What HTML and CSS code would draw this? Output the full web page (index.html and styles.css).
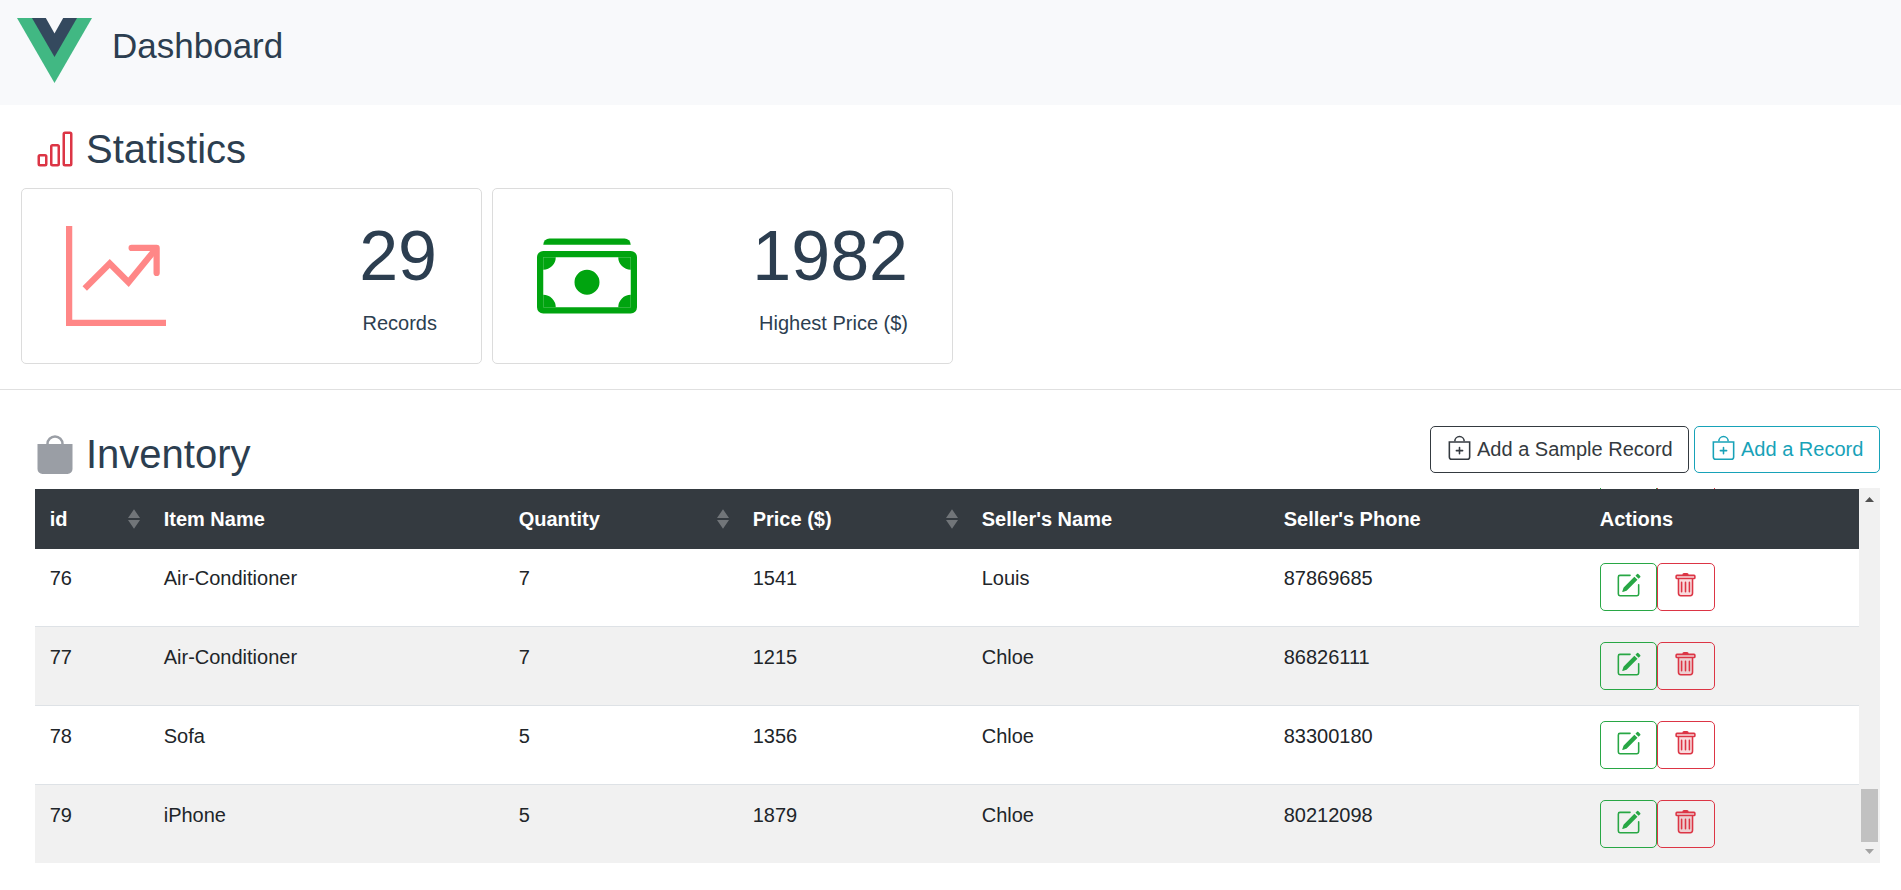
FILE: index.html
```html
<!DOCTYPE html>
<html lang="en">
<head>
<meta charset="utf-8">
<title>Dashboard</title>
<link rel="stylesheet" href="styles.css">
</head>
<body>
<svg class="sprite" aria-hidden="true">
  <symbol id="bag-plus" viewBox="0 0 16 16">
    <path fill-rule="evenodd" d="M14 5H2v9a1 1 0 0 0 1 1h10a1 1 0 0 0 1-1V5zM1 4v10a2 2 0 0 0 2 2h10a2 2 0 0 0 2-2V4H1z"/>
    <path d="M8 1.5A2.5 2.5 0 0 0 5.5 4h-1a3.5 3.5 0 1 1 7 0h-1A2.5 2.5 0 0 0 8 1.5z"/>
    <path d="M8 7.5a.5.5 0 0 1 .5.5v1.5H10a.5.5 0 0 1 0 1H8.5V12a.5.5 0 0 1-1 0v-1.5H6a.5.5 0 0 1 0-1h1.5V8a.5.5 0 0 1 .5-.5z"/>
  </symbol>
  <symbol id="pencil" viewBox="0 0 16 16">
    <path d="M15.502 1.94a.5.5 0 0 1 0 .706L14.459 3.69l-2-2L13.502.646a.5.5 0 0 1 .707 0l1.293 1.293zm-1.75 2.456-2-2L4.939 9.21a.5.5 0 0 0-.121.196l-.805 2.414a.25.25 0 0 0 .316.316l2.414-.805a.5.5 0 0 0 .196-.12l6.813-6.814z"/>
    <path fill-rule="evenodd" d="M1 13.5A1.5 1.5 0 0 0 2.5 15h11a1.5 1.5 0 0 0 1.5-1.5v-6a.5.5 0 0 0-1 0v6a.5.5 0 0 1-.5.5h-11a.5.5 0 0 1-.5-.5v-11a.5.5 0 0 1 .5-.5H9a.5.5 0 0 0 0-1H2.5A1.5 1.5 0 0 0 1 2.5v11z"/>
  </symbol>
  <symbol id="trash" viewBox="0 0 16 16">
    <path fill-opacity=".18" d="M2 1.500h12v2H2zM3.500 4h9v10.500h-9z"/>
    <path d="M5.5 5.5A.5.5 0 0 1 6 6v6a.5.5 0 0 1-1 0V6a.5.5 0 0 1 .5-.5zm2.5 0a.5.5 0 0 1 .5.5v6a.5.5 0 0 1-1 0V6a.5.5 0 0 1 .5-.5zm3 .5a.5.5 0 0 0-1 0v6a.5.5 0 0 0 1 0V6z"/>
    <path fill-rule="evenodd" d="M14.5 3a1 1 0 0 1-1 1H13v9a2 2 0 0 1-2 2H5a2 2 0 0 1-2-2V4h-.5a1 1 0 0 1-1-1V2a1 1 0 0 1 1-1H6a1 1 0 0 1 1-1h2a1 1 0 0 1 1 1h3.5a1 1 0 0 1 1 1v1zM4.118 4 4 4.059V13a1 1 0 0 0 1 1h6a1 1 0 0 0 1-1V4.059L11.882 4H4.118zM2.5 3V2h11v1h-11z"/>
  </symbol>
  <symbol id="sort" viewBox="0 0 12 20">
    <path d="M6 .3 12 9H0zM0 11h12L6 19.7z"/>
  </symbol>
</svg>

<header class="topbar">
  <svg class="logo" viewBox="0 0 75 65">
    <path fill="#41b883" d="M0 0h75L37.5 65z"/>
    <path fill="#34495e" d="M15 0h45L37.5 39z"/>
    <path fill="#f8f9fb" d="M28.8 0h17.400L37.500 15.500z"/>
  </svg>
  <h1 class="brand">Dashboard</h1>
</header>

<section class="statistics">
  <h2 class="heading">
    <svg class="heading-icon chart" viewBox="0 0 16 16"><path fill-rule="evenodd" d="M4 11H2v3h2v-3zm5-4H7v7h2V7zm5-5v12h-2V2h2zm-2-1a1 1 0 0 0-1 1v12a1 1 0 0 0 1 1h2a1 1 0 0 0 1-1V2a1 1 0 0 0-1-1h-2zM6 7a1 1 0 0 1 1-1h2a1 1 0 0 1 1 1v7a1 1 0 0 1-1 1H7a1 1 0 0 1-1-1V7zm-5 4a1 1 0 0 1 1-1h2a1 1 0 0 1 1 1v3a1 1 0 0 1-1 1H2a1 1 0 0 1-1-1v-3z"/></svg>
    <span>Statistics</span>
  </h2>
  <div class="cards">
    <article class="card">
      <svg class="card-icon trend" viewBox="0 0 16 16">
        <path d="M.5 0v15.5H16"/>
        <path d="M3 10l4-4 3 3 4.300-5.250"/>
        <path class="arrow" d="M10.500 3.500h4v4"/>
      </svg>
      <div class="figure"><strong class="number">29</strong><span class="caption">Records</span></div>
    </article>
    <article class="card">
      <svg class="card-icon cash" viewBox="0 0 16 16">
        <path d="M14 3H1a1 1 0 0 1 1-1h12a1 1 0 0 1 1 1h-1z"/>
        <path fill-rule="evenodd" d="M15 5H1v8h14V5zM1 4a1 1 0 0 0-1 1v8a1 1 0 0 0 1 1h14a1 1 0 0 0 1-1V5a1 1 0 0 0-1-1H1z"/>
        <path d="M13 5a2 2 0 0 0 2 2V5h-2zM3 5a2 2 0 0 1-2 2V5h2zm10 8a2 2 0 0 1 2-2v2h-2zM3 13a2 2 0 0 0-2-2v2h2zm7-4a2 2 0 1 1-4 0 2 2 0 0 1 4 0z"/>
      </svg>
      <div class="figure"><strong class="number">1982</strong><span class="caption">Highest Price ($)</span></div>
    </article>
  </div>
</section>

<section class="inventory">
  <div class="inventory-head">
    <h2 class="heading">
      <svg class="heading-icon bag" viewBox="0 0 16 16"><path d="M1 4h14v10a2 2 0 0 1-2 2H3a2 2 0 0 1-2-2V4zm7-2.500A2.500 2.500 0 0 0 5.500 4h-1a3.500 3.500 0 1 1 7 0h-1A2.500 2.500 0 0 0 8 1.500z"/></svg>
      <span>Inventory</span>
    </h2>
    <div class="toolbar">
      <button class="btn dark"><svg class="icon"><use href="#bag-plus"/></svg><span>Add a Sample Record</span></button>
      <button class="btn info"><svg class="icon"><use href="#bag-plus"/></svg><span>Add a Record</span></button>
    </div>
  </div>

  <div class="table-wrap">
    <div class="table-pane">
      <div class="peek"><i class="edge green"></i><i class="edge green"></i><i class="edge red"></i><i class="edge red"></i></div>
      <table class="table">
        <colgroup><col class="c-id"><col class="c-item"><col class="c-qty"><col class="c-price"><col class="c-name"><col class="c-phone"><col></colgroup>
        <thead>
          <tr>
            <th><div class="sortable">id<svg class="sort"><use href="#sort"/></svg></div></th>
            <th>Item Name</th>
            <th><div class="sortable">Quantity<svg class="sort"><use href="#sort"/></svg></div></th>
            <th><div class="sortable">Price ($)<svg class="sort"><use href="#sort"/></svg></div></th>
            <th>Seller's Name</th>
            <th>Seller's Phone</th>
            <th>Actions</th>
          </tr>
        </thead>
        <tbody>
          <tr><td>76</td><td>Air-Conditioner</td><td>7</td><td>1541</td><td>Louis</td><td>87869685</td><td><div class="actions"><button class="act edit"><svg class="icon"><use href="#pencil"/></svg></button><button class="act delete"><svg class="icon"><use href="#trash"/></svg></button></div></td></tr>
          <tr><td>77</td><td>Air-Conditioner</td><td>7</td><td>1215</td><td>Chloe</td><td>86826111</td><td><div class="actions"><button class="act edit"><svg class="icon"><use href="#pencil"/></svg></button><button class="act delete"><svg class="icon"><use href="#trash"/></svg></button></div></td></tr>
          <tr><td>78</td><td>Sofa</td><td>5</td><td>1356</td><td>Chloe</td><td>83300180</td><td><div class="actions"><button class="act edit"><svg class="icon"><use href="#pencil"/></svg></button><button class="act delete"><svg class="icon"><use href="#trash"/></svg></button></div></td></tr>
          <tr><td>79</td><td>iPhone</td><td>5</td><td>1879</td><td>Chloe</td><td>80212098</td><td><div class="actions"><button class="act edit"><svg class="icon"><use href="#pencil"/></svg></button><button class="act delete"><svg class="icon"><use href="#trash"/></svg></button></div></td></tr>
        </tbody>
      </table>
    </div>
    <div class="scrollbar">
      <svg class="scroll-arrow" viewBox="0 0 21 21"><path fill="#505050" d="M6 14h9l-4.500-5z"/></svg>
      <div class="thumb"></div>
      <svg class="scroll-arrow" viewBox="0 0 21 21"><path fill="#a3a3a3" d="M6 7h9l-4.500 5z"/></svg>
    </div>
  </div>
</section>
</body>
</html>
```
FILE: styles.css
```css
* { box-sizing: border-box; }

body {
  margin: 0;
  background: #fff;
  color: #2c3e50;
  font: 20px/30px "Liberation Sans", Arial, sans-serif;
  overflow: hidden;
}

svg { display: block; fill: currentColor; flex: none; }
.sprite { display: none; }

.topbar {
  display: flex;
  align-items: flex-start;
  height: 105px;
  padding: 17.500px 17px 0;
  background: #f8f9fb;
}
.logo { width: 75px; height: 65px; }
.brand {
  margin: 7.500px 0 0 20px;
  font-size: 35px;
  line-height: 42px;
  font-weight: 400;
}

.statistics {
  height: 285px;
  padding-top: 20px;
  border-bottom: 1px solid #e0e0e0;
}
.heading {
  display: flex;
  align-items: center;
  gap: 11px;
  margin: 0;
  padding-left: 35px;
  font-size: 40px;
  line-height: 48px;
  font-weight: 400;
}
.heading-icon { width: 40px; height: 40px; }
.chart { color: #dc3545; }
.bag { color: #9a9ea5; }

.cards {
  display: flex;
  gap: 10px;
  margin-top: 15px;
  padding-left: 21px;
}
.card {
  display: flex;
  justify-content: space-between;
  width: 461px;
  height: 176px;
  padding: 0 44px;
  border: 1px solid #dcdcdc;
  border-radius: 5px;
}
.card-icon { width: 100px; height: 100px; margin-top: 37px; }
.trend { fill: none; stroke: #ff8787; stroke-width: 1; }
.arrow { stroke-linecap: round; stroke-linejoin: round; }
.cash { color: #00a40f; }
.figure { padding-top: 25px; text-align: right; }
.number, .caption { display: block; }
.number { font-size: 70px; line-height: 84px; font-weight: 400; }
.caption { margin-top: 10px; }

.inventory { padding-left: 35px; }
.inventory-head {
  display: flex;
  justify-content: space-between;
  height: 98px;
  padding: 36px 21px 0 0;
}
.inventory-head .heading { height: 56px; padding: 0; }
.toolbar { display: flex; gap: 5px; }
.btn {
  display: flex;
  align-items: flex-start;
  gap: 5.500px;
  height: 47px;
  padding: 7px 15px 8px 15.500px;
  border: 1px solid;
  border-radius: 5px;
  background: none;
  font: inherit;
  white-space: nowrap;
}
.btn .icon { margin-top: 1px; }
.dark { width: 259px; color: #343a40; }
.info { width: 186px; color: #17a2b8; }
.icon { width: 25px; height: 25px; }

.table-wrap { display: flex; width: 1845px; height: 375px; }
.table-pane { width: 1824px; }
.peek { display: flex; height: 1px; padding-left: 1565px; }
.edge { width: 1px; height: 1px; }
.edge.green { background: #28a745; }
.edge.red { background: #dc3545; }
.edge:nth-child(2) { margin-left: 55px; }
.edge:nth-child(4) { margin-left: 56px; }

.table {
  width: 1824px;
  table-layout: fixed;
  border-collapse: separate;
  border-spacing: 0;
  color: #212529;
}
.c-id { width: 114px; }
.c-item { width: 355px; }
.c-qty { width: 234px; }
.c-price { width: 229px; }
.c-name { width: 302px; }
.c-phone { width: 316px; }
th, td { padding: 15px 15px 0 14.700px; text-align: left; vertical-align: top; }
td:last-child { padding-left: 15px; }
th { height: 60px; background: #343a40; color: #fff; font-weight: 700; }
td { height: 79px; border-top: 1px solid #dee2e6; }
tbody tr:first-child td { height: 77px; padding-top: 14px; border-top: 0; }
tbody tr:nth-child(even) td { background: #f1f1f1; }
.sortable { display: flex; justify-content: space-between; }
.sort { width: 12px; height: 20px; margin: 5px -6px 0 0; color: #717579; }

.actions { display: flex; }
.act {
  display: block;
  height: 48px;
  padding: 9px 15px 12px;
  border: 1px solid;
  border-radius: 5px;
  background: none;
}
.edit { width: 57px; color: #28a745; }
.delete { width: 58px; color: #dc3545; }

.scrollbar {
  display: flex;
  flex-direction: column;
  width: 21px;
  background: #f1f1f1;
}
.scroll-arrow { width: 21px; height: 21px; }
.thumb { width: 17px; height: 53px; margin: 280px 0 0 2px; background: #c1c1c1; }
```
